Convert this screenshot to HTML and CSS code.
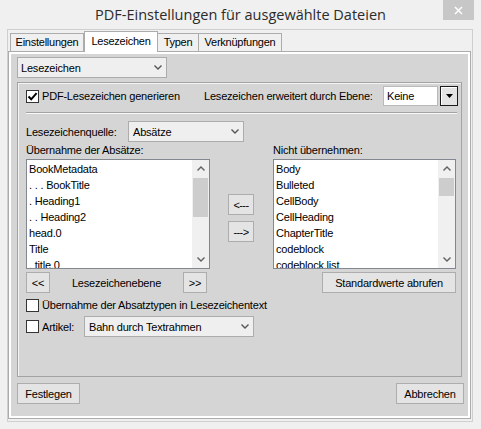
FILE: index.html
```html
<!DOCTYPE html>
<html>
<head>
<meta charset="utf-8">
<title>PDF-Einstellungen</title>
<link rel="stylesheet" href="styles.css">
</head>
<body>
<div class="titlebar">
  <div></div>
  <div class="title">PDF-Einstellungen für ausgewählte Dateien</div>
  <div class="tb-right">
    <div class="close"><svg width="9" height="9" viewBox="0 0 9 9"><path d="M1 1L8 8M8 1L1 8" stroke="#fff" stroke-width="1.5" fill="none"/></svg></div>
  </div>
</div>
<div class="client">
  <div class="tabstrip">
    <div class="tab t1">Einstellungen</div>
    <div class="tab t2 sel">Lesezeichen</div>
    <div class="tab t3">Typen</div>
    <div class="tab t4">Verknüpfungen</div>
  </div>
  <div class="tabpage">
    <div class="pageinner">
      <div class="combo c-main"><span>Lesezeichen</span><svg class="chev" width="8" height="5" viewBox="0 0 8 5"><polyline points="0.5,0.5 4,4 7.5,0.5" fill="none" stroke="#555" stroke-width="1.4"/></svg></div>
      <div class="panel">
        <div class="row r-gen">
          <div class="chkgroup g1">
            <span class="chk"><svg width="11" height="11" viewBox="0 0 11 11"><path d="M1.5 5.5L4.2 8.3L9.6 2.2" fill="none" stroke="#000" stroke-width="2"/></svg></span>
            <span class="chktext">PDF-Lesezeichen generieren</span>
          </div>
          <div class="lbl l-ebene">Lesezeichen erweitert durch Ebene:</div>
          <div class="textbox">Keine</div>
          <div class="ddbtn"><svg width="7" height="4" viewBox="0 0 7 4"><polygon points="0,0 7,0 3.5,4" fill="#000"/></svg></div>
        </div>
        <div class="sep"></div>
        <div class="row r-src">
          <div class="lbl l-src">Lesezeichenquelle:</div>
          <div class="combo c-src"><span>Absätze</span><svg class="chev" width="8" height="5" viewBox="0 0 8 5"><polyline points="0.5,0.5 4,4 7.5,0.5" fill="none" stroke="#555" stroke-width="1.4"/></svg></div>
        </div>
        <div class="row r-heads">
          <div class="lbl l-left">Übernahme der Absätze:</div>
          <div class="lbl">Nicht übernehmen:</div>
        </div>
        <div class="row r-lists">
          <div class="listbox lb-left">
            <div class="items">
              <div class="item">BookMetadata</div>
              <div class="item">. . . BookTitle</div>
              <div class="item">. Heading1</div>
              <div class="item">. . Heading2</div>
              <div class="item">head.0</div>
              <div class="item">Title</div>
              <div class="item">. title.0</div>
            </div>
            <div class="vscroll">
              <div class="arrow"><svg width="8" height="5" viewBox="0 0 8 5"><polyline points="0.5,4.5 4,1 7.5,4.5" fill="none" stroke="#606060" stroke-width="1.4"/></svg></div>
              <div class="track"><div class="thumb th-left"></div></div>
              <div class="arrow"><svg width="8" height="5" viewBox="0 0 8 5"><polyline points="0.5,0.5 4,4 7.5,0.5" fill="none" stroke="#606060" stroke-width="1.4"/></svg></div>
            </div>
          </div>
          <div class="midbtns">
            <div class="btn b-arrow">&lt;---</div>
            <div class="btn b-arrow">---&gt;</div>
          </div>
          <div class="listbox lb-right">
            <div class="items">
              <div class="item">Body</div>
              <div class="item">Bulleted</div>
              <div class="item">CellBody</div>
              <div class="item">CellHeading</div>
              <div class="item">ChapterTitle</div>
              <div class="item">codeblock</div>
              <div class="item">codeblock.list</div>
            </div>
            <div class="vscroll">
              <div class="arrow"><svg width="8" height="5" viewBox="0 0 8 5"><polyline points="0.5,4.5 4,1 7.5,4.5" fill="none" stroke="#606060" stroke-width="1.4"/></svg></div>
              <div class="track"><div class="thumb th-right"></div></div>
              <div class="arrow"><svg width="8" height="5" viewBox="0 0 8 5"><polyline points="0.5,0.5 4,4 7.5,0.5" fill="none" stroke="#606060" stroke-width="1.4"/></svg></div>
            </div>
          </div>
        </div>
        <div class="row r-level">
          <div class="btn b-small">&lt;&lt;</div>
          <div class="lbl l-level">Lesezeichenebene</div>
          <div class="btn b-small">&gt;&gt;</div>
          <div class="btn b-default">Standardwerte abrufen</div>
        </div>
        <div class="row r-chk2">
          <span class="chk"></span>
          <span class="chktext">Übernahme der Absatztypen in Lesezeichentext</span>
        </div>
        <div class="row r-art">
          <span class="chk"></span>
          <span class="chktext l-art">Artikel:</span>
          <div class="combo c-art"><span>Bahn durch Textrahmen</span><svg class="chev" width="8" height="5" viewBox="0 0 8 5"><polyline points="0.5,0.5 4,4 7.5,0.5" fill="none" stroke="#555" stroke-width="1.4"/></svg></div>
        </div>
      </div>
      <div class="footer">
        <div class="btn b-ok">Festlegen</div>
        <div class="btn b-cancel">Abbrechen</div>
      </div>
    </div>
  </div>
</div>
</body>
</html>
```
FILE: styles.css
```css
* { box-sizing: border-box; }
html, body { margin: 0; padding: 0; }
body {
  width: 481px;
  height: 429px;
  overflow: hidden;
  background: #f0f0f0;
  font-family: "Liberation Sans", Arial, sans-serif;
  font-size: 11px;
  letter-spacing: -0.2px;
  color: #000;
}

/* title bar */
.titlebar {
  height: 29px;
  display: grid;
  grid-template-columns: 1fr auto 1fr;
}
.title {
  font-family: "Open Sans", "Noto Sans", sans-serif;
  font-size: 14.5px;
  letter-spacing: 0;
  color: #2b2b2b;
  line-height: 30px;
  white-space: nowrap;
}
.tb-right {
  display: flex;
  justify-content: flex-end;
  align-items: flex-start;
  padding-right: 7px;
}
.close {
  width: 31px;
  height: 20px;
  background: #c7c7c7;
  display: flex;
  align-items: center;
  justify-content: center;
}

/* client frame */
.client {
  margin-left: 7px;
  width: 466px;
  height: 393px;
  border: 1px solid #cfcfcf;
  padding: 0 1px 2px 0;
  display: flex;
  flex-direction: column;
}
.tabstrip {
  height: 21px;
  display: flex;
  align-items: flex-end;
  padding-left: 2px;
}
.tab {
  height: 18px;
  border: 1px solid #acacac;
  border-bottom: none;
  background: #f0f0f0;
  text-align: center;
  line-height: 17px;
  letter-spacing: -0.25px;
  white-space: nowrap;
}
.tab + .tab { border-left: none; }
.tab.sel + .tab { border-left: none; }
.t1 { width: 74px; }
.t2 { width: 74px; }
.t3 { width: 41px; }
.t4 { width: 83px; }
.tab.sel {
  height: 21px;
  margin-bottom: -1px;
  background: #fff;
  border-left: 1px solid #acacac;
  position: relative;
  z-index: 1;
  line-height: 19px;
}
.tabpage {
  height: 368px;
  border: 1px solid #acacac;
  background: #fff;
  padding: 2px;
  display: flex;
}
.pageinner {
  flex: 1;
  background: #d5d5d5;
  padding: 3px 0 0 6px;
  display: flex;
  flex-direction: column;
}

/* combo boxes */
.combo {
  height: 21px;
  border: 1px solid #acacac;
  background: #efefef;
  display: flex;
  align-items: center;
  justify-content: space-between;
  padding: 0 4px 0 3px;
  white-space: nowrap;
}
.c-main { width: 150px; }
.c-src { width: 116px; padding-left: 4px; }
.c-art { width: 170px; padding-left: 4px; }

/* group panel */
.panel {
  margin-top: 4px;
  width: 445px;
  height: 295px;
  border: 1px solid #a3a3a3;
  box-shadow: inset 1px 1px 0 #f4f4f4;
  padding: 0 0 0 8px;
  display: flex;
  flex-direction: column;
}
.row {
  display: flex;
  align-items: center;
}
.lbl { white-space: nowrap; }
.chk {
  width: 13px;
  height: 13px;
  flex: none;
  border: 1px solid #333;
  background: #fff;
  display: flex;
  align-items: center;
  justify-content: center;
}
.chktext {
  margin-left: 3px;
  white-space: nowrap;
}
.r-gen { margin-top: 3px; height: 20px; }
.g1 { width: 178px; display: flex; align-items: center; }
.l-ebene { width: 179px; }
.textbox {
  width: 55px;
  height: 20px;
  border: 1px solid #b9b9b9;
  background: #fff;
  padding-left: 3px;
  line-height: 18px;
}
.ddbtn {
  margin-left: 2px;
  width: 18px;
  height: 20px;
  border: 1px solid #1a1a1a;
  background: #e3e3e3;
  box-shadow: inset 1px 1px 0 #fff;
  display: flex;
  align-items: center;
  justify-content: center;
}
.sep {
  margin-top: 6px;
  width: 431px;
  height: 2px;
  border-top: 1px solid #a3a3a3;
  border-bottom: 1px solid #f8f8f8;
}
.r-src { margin-top: 7px; }
.l-src { width: 102px; }
.r-heads { height: 15px; }
.l-left { width: 247px; }

/* lists */
.r-lists { margin-top: 2px; height: 110px; align-items: stretch; }
.listbox {
  border: 1px solid #828790;
  background: #fff;
  display: flex;
  overflow: hidden;
}
.lb-left { width: 184px; }
.lb-right { width: 183px; }
.items {
  flex: 1;
  padding: 1px 0 0 2px;
  overflow: hidden;
}
.item {
  height: 16px;
  line-height: 16px;
  white-space: pre;
}
.vscroll {
  width: 17px;
  display: flex;
  flex-direction: column;
  background: #f0f0f0;
}
.arrow {
  height: 17px;
  display: flex;
  align-items: center;
  justify-content: center;
}
.track { flex: 1; padding: 1px 1px 0 1px; }
.thumb { background: #cdcdcd; }
.th-left { height: 39px; }
.th-right { height: 18px; }
.midbtns {
  width: 63px;
  padding: 35px 0 0 18px;
  display: flex;
  flex-direction: column;
  gap: 6px;
}

/* buttons */
.btn {
  height: 21px;
  border: 1px solid #adadad;
  background: #e4e4e4;
  display: flex;
  align-items: center;
  justify-content: center;
  white-space: nowrap;
}
.b-arrow { width: 26px; letter-spacing: -0.6px; }
.r-level { margin-top: 3px; }
.b-small { width: 24px; }
.l-level { width: 133px; text-align: center; }
.b-default { width: 134px; margin-left: 115px; }
.r-chk2 { margin-top: 4px; height: 16px; }
.r-art { margin-top: 3px; height: 21px; }
.l-art { width: 42px; }

.footer {
  margin-top: 6px;
  width: 447px;
  display: flex;
  justify-content: space-between;
}
.b-ok { width: 63px; }
.b-cancel { width: 68px; }
```
